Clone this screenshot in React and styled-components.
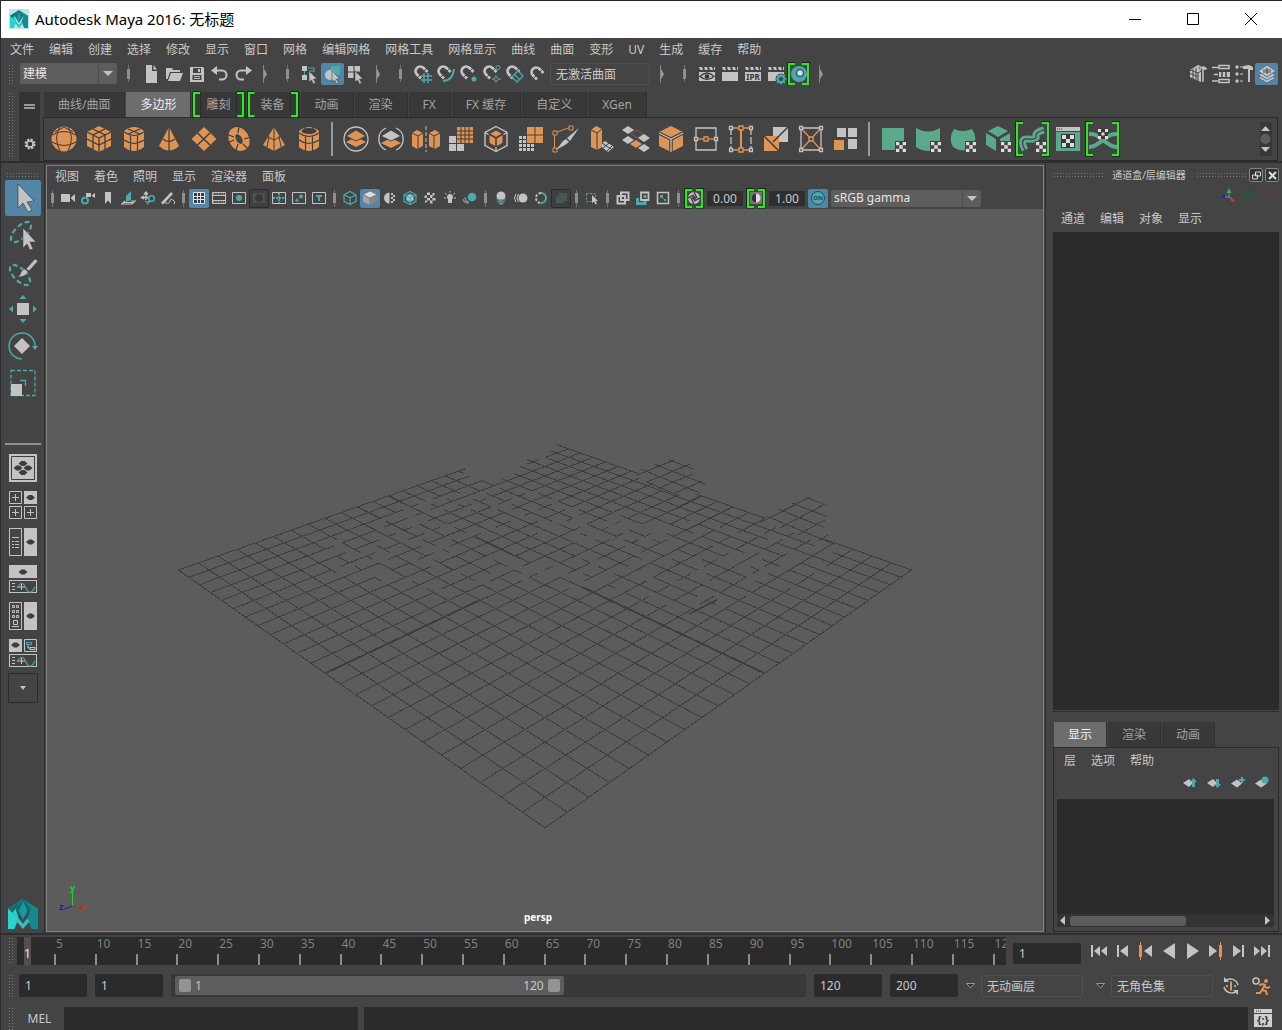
import React, { useState } from 'react';
import styled, { createGlobalStyle, css } from 'styled-components';

const GREY = '#c3c3c3';
const ORANGE = '#dd9455';
const TEAL = '#4ba9ad';
const GREEN = '#5ba88a';
const DARK = '#3d3d3d';

const MENUS = ['文件', '编辑', '创建', '选择', '修改', '显示', '窗口', '网格', '编辑网格', '网格工具', '网格显示', '曲线', '曲面', '变形', 'UV', '生成', '缓存', '帮助'];
const PANEL_MENUS = ['视图', '着色', '照明', '显示', '渲染器', '面板'];
const CHANNEL_MENUS = ['通道', '编辑', '对象', '显示'];
const LAYER_MENUS = ['层', '选项', '帮助'];

const SHELF_TABS = [
  { name: '曲线/曲面' },
  { name: '多边形' },
  { name: '雕刻', marked: true },
  { name: '装备', marked: true },
  { name: '动画' },
  { name: '渲染' },
  { name: 'FX' },
  { name: 'FX 缓存' },
  { name: '自定义' },
  { name: 'XGen' },
];

// '|' is a separator, '>' a collapse arrow, '[x]' an icon in green brackets
const FILE_ICONS = ['|', 'file', 'folder', 'save', 'undo', 'redo', '>', '|', 'selHier', 'selObj', 'selComp', '>', '|', 'snapGrid', 'snapCurve', 'snapPoint', 'snapCenter', 'snapPlane', 'magnet'];
const RENDER_ICONS = ['>', '|', 'clapEye', 'clap', 'clapIpr', 'clapGear', '[hyper]', '>'];
const PANEL_ICONS = ['|', 'camera', 'camGear', 'bookmark', 'imagePlane', 'panZoom', 'grease', '|', 'grid', 'film', 'resGate', 'gateMask', 'fieldChart', 'safeAction', 'safeTitle', '|', 'wire', 'shaded', 'defMat', 'wireShade', 'checker', 'light', 'shadow', '|', 'ao', 'blur', 'aa', 'dof', '|', 'isolate', '|', 'xray', 'xrayJoint', 'xrayComp', '|'];
const SHELF_ICONS = ['sphere', 'cube', 'cylinder', 'cone', 'plane', 'torus', 'pyramid', 'pipe', '|', 'combine', 'separate', 'mirror', 'smooth', 'boolCube', 'reduce', 'pen', 'extrude', 'bridge', 'bevel', 'collapse', 'insert', 'wedge', 'poke', 'quads', '|', 'uvPlane', 'uvCyl', 'uvSphere', 'uvAuto', '[uvCurve]', 'uvEditor', '[uvCross]'];
const TOOLS = ['arrow', 'lasso', 'brush', 'move', 'rotate', 'scale'];
const LAYOUTS = ['single', 'four', 'outliner', 'graph', 'hyperg', 'three'];
const PLAY_ICONS = ['toStart', 'backFrame', 'backKey', 'playBack', 'play', 'nextKey', 'nextFrame', 'toEnd'];
const LAYER_ICONS = ['layerUp', 'layerDown', 'layerNew', 'layerSel'];
const FRAMES = Array.from({ length: 24 }, (_, i) => (i + 1) * 5);

const magnet = (
  <g fill="none">
    <path d="M8 14.500L3.800 10.300a4.600 4.600 0 0 1 6.500-6.500L14.500 8" stroke={GREY} strokeWidth="2.800" />
    <path d="M4.500 13.500l3-3M10.500 7.500l3-3" stroke="#444" strokeWidth="1" />
  </g>
);
const clapper = (
  <g fill={GREY}>
    <path d="M2 3h3l1 3H3zM7 3h3l1 3H8zM12 3h3l1 3h-3z" />
    <path d="M2 8h16v9H2zM17 3h1v3h-1z" />
  </g>
);
const pointer = <path d="M9 7v11l2.500-2 2 4 2-1-2-4h3.500z" fill={GREY} stroke="#444" strokeWidth=".6" />;
const uvChecker = (
  <g>
    <path d="M16 16h11v11H16z" fill="#444" />
    <path d="M17 17h3.300v3.300H17zM23.700 17H27v3.300h-3.300zM20.300 20.300h3.400v3.400h-3.400zM17 23.700h3.300V27H17zM23.700 23.700H27V27h-3.300z" fill="#ddd" />
  </g>
);
const graphLine = (y) => (
  <g fill="none" strokeWidth="1">
    <rect x=".5" y={y + 0.5} width="27" height="12" stroke={GREY} />
    <path d={`M3 ${y + 3.5}h3M3 ${y + 6.5}h3M3 ${y + 9.5}h3M12.500 ${y + 4}v6M9 ${y + 7}h7`} stroke={GREY} />
    <path d={`M8 ${y + 8}q5-9 9 0t9-1`} stroke={TEAL} strokeWidth="1.200" />
  </g>
);
const diamond = (x, y) => <path d={`M${x - 4.5} ${y}l3-2.500h3l3 2.500-3 2.500h-3z`} fill={DARK} />;

// Status line, 20 x 20
const STATUS = {
  file: <path d="M5 1h6v6h5v12H5zM12.500 1L16 5.500h-3.500z" fill={GREY} />,
  folder: <path d="M2 4h6l1 2h7v2H6L3.500 15H2zM7 9h12l-3 8H4z" fill={GREY} />,
  save: <path fillRule="evenodd" d="M3 3h13l1 1v14H3zM6 4v5h8V4zM11 5h2v3h-2zM5.500 11v5h9v-5zM7 12h6v1H7zM7 14h6v1H7z" fill={GREY} />,
  undo: (
    <g>
      <path d="M5 6.500h7a4 4 0 0 1 0 9H9" fill="none" stroke={GREY} strokeWidth="2" />
      <path d="M1 6.500L7 2v9z" fill={GREY} />
    </g>
  ),
  redo: (
    <g>
      <path d="M15 6.500H8a4 4 0 0 0 0 9h3" fill="none" stroke={GREY} strokeWidth="2" />
      <path d="M19 6.500L13 2v9z" fill={GREY} />
    </g>
  ),
  selHier: (
    <g>
      <path d="M2 2h5v5H2zM2 11h5v5H2z" fill={GREY} />
      <path d="M4.500 7v4M8 4h6v4M9 7h5" fill="none" stroke={TEAL} />
      {pointer}
    </g>
  ),
  selObj: (
    <g>
      <path d="M8 2h9v9H8z" fill={TEAL} />
      <circle cx="7" cy="11" r="5" fill={GREY} />
      {pointer}
    </g>
  ),
  selComp: (
    <g>
      <path d="M2 2h5.500v5.500H2zM8.500 2H14v5.500H8.500zM2 8.500h5.500V14H2z" fill={GREY} />
      {pointer}
    </g>
  ),
  magnet: <g transform="translate(1 1)">{magnet}</g>,
  snapGrid: <g>{magnet}<path d="M11 9v10M15 9v10M8 12h11M8 16h11" stroke={TEAL} strokeWidth="1.500" /></g>,
  snapCurve: <g>{magnet}<path d="M7 17c7 0 10-4 11-12" fill="none" stroke={TEAL} strokeWidth="2" /></g>,
  snapPoint: <g>{magnet}<circle cx="15" cy="15" r="2.500" fill={TEAL} /></g>,
  snapCenter: (
    <g>
      {magnet}
      <circle cx="16" cy="3.500" r="2" fill="none" stroke={TEAL} />
      <circle cx="14" cy="15" r="2" fill="none" stroke={TEAL} />
      <path d="M14 11v2M14 17v2M10 15h2M16 15h3" stroke={TEAL} />
    </g>
  ),
  snapPlane: <g>{magnet}<path d="M7 13l6-6 5 5-6 6zM10 11l4 4" fill="#444" stroke={TEAL} strokeWidth="1.300" /></g>,
  clap: clapper,
  clapEye: (
    <g>
      {clapper}
      <path d="M3 12.500q7-7 14 0q-7 6-14 0z" fill={GREY} stroke="#333" strokeWidth="1.200" />
      <circle cx="10" cy="12.500" r="2.300" fill="#333" />
    </g>
  ),
  clapIpr: (
    <g>
      {clapper}
      <text x="10" y="16" fontSize="8" fontWeight="700" textAnchor="middle" fill="#333">IPR</text>
    </g>
  ),
  clapGear: (
    <g>
      {clapper}
      <circle cx="15" cy="15" r="5.500" fill="#444" />
      <circle cx="15" cy="15" r="3.500" fill="none" stroke={TEAL} strokeWidth="2" />
      <path d="M15 9.500v11M9.500 15h11M11 11l8 8M19 11l-8 8" stroke={TEAL} strokeWidth="1.200" />
      <circle cx="15" cy="15" r="2" fill="#444" />
    </g>
  ),
  hyper: (
    <g>
      <circle cx="10" cy="10" r="8" fill={TEAL} />
      <circle cx="11" cy="9" r="3.500" fill="#ddd" stroke="#2c5f78" strokeWidth="1.500" />
    </g>
  ),
  modeling: (
    <g>
      <path d="M2 6l8-5 3 1v16l-5-2-6-3z" fill={GREY} />
      <path d="M5 5v10M8 4v13M2 9.500l8 3M2 6l8 3v9M10 9l3-2" stroke="#444" fill="none" />
      <path d="M11 3l5-1 3 2v2h-3v12h-2V5h-3z" fill={GREY} stroke="#444" strokeWidth=".5" />
    </g>
  ),
  attr: (
    <g fill="none" stroke={GREY} strokeWidth="1.500">
      <path d="M1 3.500h6M3 10.500h4M1 17h6" />
      <path d="M8 1.500h10v3H8zM8 15.500h10v3H8z" />
      <path d="M8 8h11v5H8z" fill={GREY} stroke="none" />
      <path d="M11 8v5M15 8v5" stroke="#444" />
    </g>
  ),
  toolSet: (
    <g fill={GREY}>
      <circle cx="3" cy="3" r="1.700" />
      <circle cx="3" cy="10" r="1.700" />
      <circle cx="3" cy="17" r="1.700" />
      <path d="M6 2.500h3v1H6zM6 9.500h3v1H6zM6 16.500h3v1H6zM9 2l6-1 4 2v3h-3v12h-2V5H9z" />
    </g>
  ),
  layers: (
    <g fill={GREY} stroke="#46698a" strokeWidth=".9">
      <path d="M1 14l9-5 9 5-9 5z" />
      <path d="M1 11l9-5 9 5-9 5z" />
      <path d="M1 7l9-6 9 6-9 6z" />
      <path d="M6 6h8M6 8h8M10 4v6" stroke="#444" />
    </g>
  ),
  loop: (
    <g fill="none" stroke={GREY} strokeWidth="1.500">
      <path d="M4 5a8 8 0 0 1 13 4M16 15A8 8 0 0 1 3 11" />
      <path d="M3 1v5h5zM17 19v-5h-5z" fill={GREY} stroke="none" />
      <path d="M10 5.500v9" stroke={ORANGE} strokeWidth="2" />
      <path d="M5 10h2M13 10h2" />
    </g>
  ),
  runner: (
    <g fill="none" stroke={ORANGE} strokeWidth="2">
      <circle cx="5" cy="5" r="3" stroke={GREY} strokeWidth="1.500" />
      <circle cx="15" cy="5" r="2" fill={ORANGE} stroke="none" />
      <path d="M8 9l4-1 2 1-3 5 4 1 1 4M11 14l-2 3H5M13 10l3 2 3-1" />
    </g>
  ),
  script: (
    <g>
      <path d="M1 1h18v4H1zM1 6h18v13H1z" fill="#d0d0d0" />
      <path d="M3 3h1M5 3h1M7 3h1" stroke="#333" />
      <text x="10" y="16" fontSize="11" fontWeight="700" textAnchor="middle" fill="#333">{'{;}'}</text>
    </g>
  ),
};

// Panel toolbar, 16 x 16
const PANEL = {
  camera: <path d="M1 4h9v8H1zM11 7.500L15 4v8l-4-3.500z" fill={GREY} />,
  camGear: (
    <g>
      <path d="M6 3h5v4H6zM12 5l3-2v5l-3-2z" fill={GREY} />
      <circle cx="5" cy="10.500" r="3" fill="none" stroke={TEAL} strokeWidth="2" />
    </g>
  ),
  bookmark: <path d="M5 2h6v12l-3-3.500L5 14z" fill={GREY} />,
  imagePlane: (
    <g>
      <path d="M6 6l5-5v9l-5 2z" fill={TEAL} />
      <path d="M5 11L2 14h10l3-3h-4M4 12.500h9" fill="none" stroke={GREY} strokeWidth="1.200" />
    </g>
  ),
  panZoom: (
    <g fill="none">
      <path d="M6 3v7M2 7.500h8M4 4.500L6 2l2 2.500M4 6L1.500 7.500 4 9M6 11v1" stroke={GREY} strokeWidth="1.400" />
      <circle cx="11.500" cy="8.500" r="2.800" stroke={TEAL} strokeWidth="1.600" />
      <path d="M9.500 11L7 14" stroke={TEAL} strokeWidth="2" />
    </g>
  ),
  grease: (
    <g fill="none">
      <path d="M12 3L5 10.500l-3 3" stroke={GREY} strokeWidth="2.600" />
      <path d="M5 13q5 1 5-2t3-1 1 4" stroke={GREY} />
    </g>
  ),
  grid: <path d="M2.500 2.500h11v11h-11zM2.500 6.500h11M2.500 9.500h11M6.500 2.500v11M9.500 2.500v11" fill="#2d3b47" stroke="#e3e3e3" />,
  film: (
    <g fill="none" stroke={GREY}>
      <path d="M1.500 2.500h13v11h-13zM1.500 5.500h13M1.500 10.500h13" />
      <path d="M2 4h12M2 12h12" strokeDasharray="1 1.500" />
    </g>
  ),
  resGate: (
    <g>
      <path d="M1.500 2.500h13v11h-13z" fill="none" stroke={GREY} />
      <circle cx="8" cy="8" r="3" fill={TEAL} />
    </g>
  ),
  gateMask: (
    <g>
      <rect x="2" y="3" width="12" height="10" fill="#505050" />
      <circle cx="8" cy="8" r="4" fill="#3a3a3a" />
    </g>
  ),
  fieldChart: (
    <g fill="none">
      <path d="M1.500 2.500h13v11h-13z" stroke={GREY} />
      <path d="M8 3v10M2 8h12" stroke={TEAL} strokeWidth="2" strokeDasharray="2 1" />
    </g>
  ),
  safeAction: (
    <g>
      <path d="M1.500 2.500h13v11h-13z" fill="none" stroke={GREY} />
      <circle cx="10" cy="6.500" r="2" fill={TEAL} />
      <path d="M4 11.500L6 8l2 3.500z" fill={TEAL} />
    </g>
  ),
  safeTitle: (
    <g>
      <path d="M1.500 2.500h13v11h-13z" fill="none" stroke={GREY} />
      <path d="M5 5h6v2H9v4H7V7H5z" fill={TEAL} />
    </g>
  ),
  wire: <path d="M8 1.500l6 3.300v6.600L8 14.500l-6-3.100V4.800zM2 4.800l6 3 6-3M8 7.800v6.700" fill="none" stroke={TEAL} strokeWidth="1.200" />,
  shaded: (
    <g>
      <path d="M8 1l7 3.500L8 8 1 4.500z" fill="#ddd" stroke="#555" strokeWidth=".5" />
      <path d="M1 5l6.500 3.500V15L1 11.500z" fill="#a9a39c" />
      <path d="M15 5L8.500 8.500V15l6.500-3.500z" fill="#8c857e" />
    </g>
  ),
  defMat: (
    <g>
      <path d="M7.500 2.500a5.500 5.500 0 0 0 0 11z" fill={GREY} />
      <path d="M9 3h2v2H9zM11 5h2v2h-2zM9 7h2v2H9zM11 9h2v2h-2zM9 11h2v2H9z" fill={GREY} />
    </g>
  ),
  wireShade: (
    <g fill="none" stroke={TEAL} strokeWidth="1.200">
      <path d="M8 1.500l6 3.300v6.600L8 14.500l-6-3.100V4.800z" />
      <path d="M8 4l3.500 2v4L8 12l-3.500-2V6z" fill="#b9c9ca" />
      <path d="M2 4.800l6 3 6-3M8 7.800v6.700" />
    </g>
  ),
  checker: (
    <g fill={GREY}>
      <path d="M5 2.500h3V5H5zM10.500 3h2v2.500h-2zM8 5h2.500v3H8zM2.500 5.500H5V8H2.500zM5 8h3v2.500H5zM10.500 8h3v2.500h-3zM3 10.500h2v2H3zM8 10.500h2.500v3H8z" />
    </g>
  ),
  light: (
    <g>
      <path d="M8 4a3 3 0 0 1 2 5.300V13H6V9.300A3 3 0 0 1 8 4z" fill={GREY} />
      <path d="M8 1v1.500M2 8h2M12 8h2M3 3l1.500 1.500M13 3l-1.500 1.500" stroke={GREY} />
    </g>
  ),
  shadow: (
    <g>
      <circle cx="10" cy="7" r="4.300" fill={TEAL} />
      <path d="M1 9q1 4 6 4M3 7q0 4 4 5" fill="none" stroke="#6f8f90" strokeWidth="1.500" />
    </g>
  ),
  ao: (
    <g>
      <circle cx="8" cy="6" r="4.500" fill={GREY} />
      <path d="M3.500 8.500q4.500 3 9 0M4 11q4 2.500 8 0M5.500 13.500q2.500 1 5 0" fill="none" stroke="#5f9a9c" strokeWidth="1.300" />
    </g>
  ),
  blur: (
    <g>
      <circle cx="10" cy="8" r="4.500" fill={GREY} />
      <path d="M5.500 4q-3 4 0 8M3 4q-3 4 0 8" fill="none" stroke={GREY} />
    </g>
  ),
  aa: (
    <g fill="none" strokeWidth="2">
      <path d="M8 3a5 5 0 0 1 0 10" stroke={TEAL} />
      <path d="M8 3a5 5 0 0 0 0 10" stroke={GREY} strokeDasharray="2.500 1.500" />
    </g>
  ),
  dof: <path d="M6 3h8v8h-3v2H3V6h3z" fill="#46585a" />,
  isolate: (
    <g>
      <path d="M2.500 3.500h9v8h-9z" fill="none" stroke={TEAL} strokeDasharray="2 1.500" />
      <path d="M8 5v8l2-1.500 1.500 3 1.500-1-1.500-2.500H14z" fill={GREY} />
    </g>
  ),
  xray: <path d="M6 2.500h7.500V10H6zM2.500 6H10v7.500H2.500z" fill="none" stroke={GREY} strokeWidth="2" />,
  xrayJoint: (
    <g fill="none" strokeWidth="1.800">
      <path d="M2.500 8v5.500H10V11" stroke={TEAL} strokeWidth="3" />
      <path d="M6 2.500h7.500V10H6z" stroke={GREY} />
      <path d="M8.500 5h3v3h-3z" fill={TEAL} />
    </g>
  ),
  xrayComp: (
    <g>
      <path d="M2.500 2.500h11v11h-11z" fill="none" stroke={GREY} strokeWidth="1.500" />
      <path d="M5 5h3v3H5zM9 9h2v2H9zM8 8h1v1H8z" fill={TEAL} />
    </g>
  ),
  aperture: (
    <g>
      <circle cx="8" cy="8" r="6" fill={GREY} />
      <path d="M8 2l3 6M14 8l-6 3M8 14L5 8M2 8l6-3" stroke="#444" strokeWidth="1.500" />
      <circle cx="8" cy="8" r="2" fill="#444" />
    </g>
  ),
  contrast: (
    <g>
      <path d="M2 2h12v12H2z" fill="#777" />
      <circle cx="8" cy="8" r="4.500" fill="#ddd" />
      <path d="M8 3.500a4.500 4.500 0 0 0 0 9z" fill="#333" />
    </g>
  ),
  on: (
    <g>
      <circle cx="8" cy="8" r="6.500" fill={TEAL} stroke="#254d63" />
      <text x="8" y="10" fontSize="6" fontWeight="700" textAnchor="middle" fill="#1f4458">ON</text>
    </g>
  ),
  layerUp: (
    <g>
      <path d="M1 8l6-4 4 4-4 4z" fill={GREY} />
      <path d="M10 12V7H8l3.500-4L15 7h-2v5z" fill={TEAL} />
    </g>
  ),
  layerDown: (
    <g>
      <path d="M1 8l6-4 4 4-4 4z" fill={GREY} />
      <path d="M10 4v5H8l3.500 4L15 9h-2V4z" fill={TEAL} />
    </g>
  ),
  layerNew: (
    <g>
      <path d="M1 8.500l6-4 5 4-5 4z" fill={GREY} />
      <path d="M9 4h2V2h2v2h2v2h-2v2h-2V6H9z" fill={TEAL} />
    </g>
  ),
  layerSel: (
    <g>
      <path d="M1 8.500l6-4 6 4-6 4z" fill={GREY} />
      <circle cx="11" cy="5" r="3.500" fill={TEAL} />
    </g>
  ),
};

// Shelf, 28 x 28
const SHELF = {
  sphere: (
    <g>
      <circle cx="14" cy="14" r="12.500" fill={ORANGE} />
      <path d="M2 10q12-7 24 0M2 17q12 7 24 0M10 2q-7 10 0 24M18 2q7 10 0 24M14 2L5 7M14 2l9 5" fill="none" stroke={DARK} />
    </g>
  ),
  cube: (
    <g>
      <path d="M14 1l12 6v14l-12 6-12-6V7z" fill={ORANGE} />
      <path d="M2 7l12 6 12-6M14 13v14M8 4l12 6v14M20 4L8 10v14M2 14l12 6 12-6" fill="none" stroke={DARK} strokeWidth="1.300" />
    </g>
  ),
  cylinder: (
    <g>
      <path d="M4 6q10-8 20 0v16q-10 8-20 0z" fill={ORANGE} />
      <path d="M4 7q10 7 20 0M4 15q10 7 20 0M10.500 10v16M17.500 10v16M8 4l12 5M20 4L8 9" fill="none" stroke={DARK} strokeWidth="1.200" />
    </g>
  ),
  cone: (
    <g>
      <path d="M14 2l10 19q-10 9-20 0z" fill={ORANGE} />
      <path d="M14 2v24M8 14q6 5 12 0" fill="none" stroke={DARK} strokeWidth="1.200" />
    </g>
  ),
  plane: (
    <g>
      <path d="M14 2l12.500 12L14 26 1.500 14z" fill={ORANGE} />
      <path d="M7.500 8L20 20M20 8L7.500 20" stroke={DARK} strokeWidth="1.500" />
    </g>
  ),
  torus: (
    <g fill="none">
      <ellipse cx="14" cy="14" rx="6.500" ry="9" stroke={ORANGE} strokeWidth="7" transform="rotate(-30 14 14)" />
      <path d="M1 9l8 3M14 1l-1 7M26 12l-7 2M23 24l-5-5M11 25l2-6M2 18l7-3" stroke={DARK} strokeWidth="1.200" />
    </g>
  ),
  pyramid: (
    <g>
      <path d="M14 2l11 18-11 6-11-6z" fill={ORANGE} />
      <path d="M14 2v24M8 12l6 3 6-3M9 11L7 22M19 11l2 11" fill="none" stroke={DARK} />
    </g>
  ),
  pipe: (
    <g>
      <path d="M4 6q10-8 20 0v16q-10 8-20 0z" fill={ORANGE} />
      <ellipse cx="14" cy="6" rx="7.500" ry="3" fill={DARK} />
      <path d="M4 8q10 7 20 0M4 15q10 7 20 0M10.500 11v15M17.500 11v15M10 1v3M18 1v3" fill="none" stroke={DARK} strokeWidth="1.200" />
    </g>
  ),
  combine: (
    <g>
      <circle cx="14" cy="14" r="12" fill="none" stroke={GREY} strokeWidth="1.300" />
      <path d="M4 17l10-5 10 5-10 5z" fill={ORANGE} />
      <path d="M4 11l10-6 10 6-10 5z" fill={ORANGE} stroke="#444" />
    </g>
  ),
  separate: (
    <g>
      <path d="M9 3a12 12 0 0 0 0 22M19 3a12 12 0 0 1 0 22" fill="none" stroke={GREY} strokeWidth="1.300" />
      <path d="M4 18l10-5 10 5-10 5z" fill={ORANGE} />
      <path d="M4 11l10-6 10 6-10 5z" fill={GREY} stroke="#444" />
    </g>
  ),
  mirror: (
    <g>
      <path d="M0 8l5-3 6 3v13l-6 3-5-3zM17 8l6-3 5 3v13l-5 3-6-3z" fill={ORANGE} />
      <path d="M0 8l6 3 5-3M6 11v13M17 8l5 3 6-3M22 11v13" fill="none" stroke={DARK} />
      <path d="M14 1v26" stroke={GREY} strokeDasharray="4 2" />
    </g>
  ),
  smooth: (
    <g>
      <path d="M10 2h16v16H10z" fill={ORANGE} />
      <path d="M14 2v16M18 2v16M22 2v16M10 6h16M10 10h16M10 14h16" stroke={DARK} />
      <path d="M2 10h8v9H2z" fill="#444" />
      <path d="M2 11h7v7H2zM2 19h7v7H2zM10 19h7v7h-7z" fill={GREY} />
    </g>
  ),
  boolCube: (
    <g>
      <path d="M14 1.500l11 6v13l-11 6-11-6v-13zM3 7.500l11 6 11-6M14 13.500v13" fill="none" stroke={GREY} strokeWidth="1.400" />
      <path d="M14 5l7 4v9l-7 4-7-4V9z" fill={ORANGE} stroke="#444" />
      <path d="M7 9l7 4 7-4M14 13v9" fill="none" stroke={DARK} strokeWidth="1.500" />
    </g>
  ),
  reduce: (
    <g>
      <path d="M2 11h15v15H2z" fill={GREY} />
      <path d="M5.500 11v15M9.500 11v15M13.500 11v15M2 14.500h15M2 18.500h15M2 22.500h15" stroke={DARK} />
      <path d="M9 1h18v18H9z" fill="#444" />
      <path d="M10 2h7.500v7.500H10zM18.500 2H26v7.500h-7.500zM18.500 10.500H26V18h-7.500zM10 10.500h7.500V18H10z" fill={ORANGE} />
    </g>
  ),
  pen: (
    <g>
      <path d="M2.500 9v16M2.500 8L19 2" fill="none" stroke={ORANGE} />
      <path d="M1 6h4v4H1zM17 1h4v4h-4zM1 23h4v4H1z" fill="#444" stroke={ORANGE} />
      <path d="M27 3l-9 13-3-3zM14 14l3 3-4 3L4 25l7-9z" fill={GREY} />
    </g>
  ),
  extrude: (
    <g>
      <path d="M12 20l6-4 9 6-6 5z" fill={GREY} />
      <path d="M16 23l6-5M20 26l5-5M15 18l9 6" stroke={DARK} />
      <path d="M4 5l5-4 6 3v18l-5 3-6-3z" fill={ORANGE} />
      <path d="M4 5l6 3 5-4M10 8v17" fill="none" stroke={DARK} />
    </g>
  ),
  bridge: (
    <g fill={GREY}>
      <path d="M0 5l6-4 6 4-6 4zM16 13l6-4 6 4-6 4zM0 15l6-4 6 4-6 4zM16 23l6-4 6 4-6 4z" />
      <path d="M9 9l6-4 6 4-6 4z" fill="none" stroke="#7d5f4d" />
      <path d="M8 19l6-4 6 4-6 4z" fill={ORANGE} />
    </g>
  ),
  bevel: (
    <g>
      <path d="M14 1l12 6v14l-12 6-12-6V7z" fill={ORANGE} />
      <path d="M2 8l12 6 12-6M14 14v13" fill="none" stroke={DARK} strokeWidth="3.500" />
      <path d="M2 8l12 6 12-6M14 14v13" fill="none" stroke={GREY} strokeWidth="1.300" />
    </g>
  ),
  collapse: (
    <g fill="#444" stroke={GREY} strokeWidth="1.300">
      <path d="M4 3h20v22H4z" />
      <path d="M3 14h22" stroke={ORANGE} />
      <path d="M2.500 12.500h3v3h-3zM22.500 12.500h3v3h-3z" />
      <path d="M12 12h4v4h-4z" stroke={ORANGE} />
    </g>
  ),
  insert: (
    <g fill="#444" stroke={GREY} strokeWidth="1.300">
      <path d="M4 3h20M4 25h20" stroke={ORANGE} />
      <path d="M4 3v22M24 3v22" strokeDasharray="7 2" />
      <path d="M14 3v22" stroke={ORANGE} strokeWidth="2" />
      <path d="M2.500 1.500h3v3h-3zM22.500 1.500h3v3h-3zM2.500 23.500h3v3h-3zM22.500 23.500h3v3h-3z" />
      <path d="M12 1h4v4h-4zM12 23h4v4h-4z" stroke={ORANGE} />
    </g>
  ),
  wedge: (
    <g>
      <path d="M11 2h15v15H11z" fill={GREY} />
      <path d="M2 11h15v15H2z" fill={ORANGE} />
      <path d="M2 11l15 15M26 2L11 17" stroke={DARK} strokeWidth="1.500" />
    </g>
  ),
  poke: (
    <g fill="#444" stroke={GREY} strokeWidth="1.300">
      <path d="M4 3h20v22H4z" />
      <path d="M4 3l20 22M24 3L4 25" stroke={ORANGE} />
      <path d="M2.500 1.500h3v3h-3zM22.500 1.500h3v3h-3zM2.500 23.500h3v3h-3zM22.500 23.500h3v3h-3z" />
      <path d="M12 12h4v4h-4z" stroke={ORANGE} />
    </g>
  ),
  quads: (
    <g>
      <path d="M5 3h9v9H5zM16 3h9v9h-9zM16 14h9v10h-9z" fill={GREY} />
      <path d="M2 15h10v10H2z" fill={ORANGE} />
    </g>
  ),
  uvPlane: <g><path d="M3 3h22v22H3z" fill={GREEN} />{uvChecker}</g>,
  uvCyl: <g><path d="M2 3q12 7 24 0v19q-12 8-24 0z" fill={GREEN} />{uvChecker}</g>,
  uvSphere: <g><path d="M5 4q9 4 18 0 6 8 1 18-10 7-20 0-5-9 1-18z" fill={GREEN} />{uvChecker}</g>,
  uvAuto: <g><path d="M14 1l10 5-10 6L4 6zM2 8l10 6v12L2 20zM26 8l-10 6v12l10-6z" fill={GREEN} />{uvChecker}</g>,
  uvCurve: (
    <g fill="none">
      <path d="M6 25Q0 13 9 14t8-3T25 5" stroke={GREEN} strokeWidth="7" />
      <path d="M6 25Q0 13 9 14t8-3T25 5" stroke={DARK} strokeWidth="1.200" />
      {uvChecker}
    </g>
  ),
  uvEditor: (
    <g>
      <path d="M2 2h24v4H2z" fill={GREY} />
      <path d="M3 4h1M5 4h1M7 4h1" stroke="#333" />
      <path d="M2 7h24v19H2z" fill={GREEN} />
      <path d="M7 9h14v14H7z" fill="#383838" />
      <path d="M8 10h4v4H8zM16 10h4v4h-4zM12 14h4v4h-4zM8 18h4v4H8zM16 18h4v4h-4z" fill="#ddd" />
    </g>
  ),
  uvCross: (
    <g>
      <path d="M0 9c8 0 8 2 14 6s8 7 14 7M28 9c-8 0-8 2-14 6S6 22 0 22" fill="none" stroke={GREEN} strokeWidth="4" />
      <path d="M9 4h10v10H9z" fill="#383838" />
      <path d="M9 4h3v3H9zM16 4h3v3h-3zM12.500 7.500h3v3h-3zM9 11h3v3H9zM16 11h3v3h-3z" fill="#ddd" />
    </g>
  ),
};

// Tool box and layouts, 28 x 28
const TOOLBOX = {
  arrow: <path d="M9 0v24l5-5 5 9 4-2-5-8 7-1z" fill={GREY} stroke="#333" strokeWidth=".6" />,
  lasso: (
    <g>
      <ellipse cx="12" cy="11" rx="6" ry="13" fill="none" stroke={TEAL} strokeWidth="2.200" strokeDasharray="5 3" transform="rotate(45 12 11)" />
      <path d="M14 7v20l4-4 3 6 3-1-3-7h6z" fill={GREY} stroke="#444" strokeWidth=".6" />
    </g>
  ),
  brush: (
    <g>
      <ellipse cx="11" cy="17" rx="6" ry="13" fill="none" stroke={TEAL} strokeWidth="2.200" strokeDasharray="5 3" transform="rotate(-45 11 17)" />
      <path d="M26 1l3 2-9 10-3-2zM16 11l3 3q-2 5-11 5 4-2 4-5 2-3 4-3z" fill={GREY} stroke="#444" strokeWidth=".6" />
    </g>
  ),
  move: (
    <g>
      <path d="M8 8h12v12H8z" fill={GREY} />
      <path d="M10.500 4L14 0l3.500 4zM10.500 24l3.500 4 3.500-4zM4 10.500L0 14l4 3.500zM24 10.500l4 3.500-4 3.500z" fill={TEAL} />
    </g>
  ),
  rotate: (
    <g>
      <path d="M13 6l8 8-8 8-8-8z" fill={GREY} />
      <path d="M13 27A13 13 0 1 1 26 15" fill="none" stroke={TEAL} strokeWidth="1.500" />
      <path d="M23 14h6l-3 4z" fill={TEAL} />
    </g>
  ),
  scale: (
    <g>
      <path d="M2 1.500h24v25H2z" fill="none" stroke={TEAL} strokeWidth="1.300" strokeDasharray="4 2" />
      <path d="M2 15h11v12H2z" fill={GREY} />
      <path d="M11 11.500h5.500V17" fill="none" stroke={TEAL} strokeWidth="1.300" />
    </g>
  ),
  single: (
    <g>
      <path d="M0 0h28v28H0z" fill={GREY} />
      <path d="M2.500 2.500h23v23h-23z" fill="none" stroke={DARK} />
      {diamond(14, 9.5)}
      {diamond(9, 14)}
      {diamond(19, 14)}
      {diamond(14, 18.5)}
    </g>
  ),
  four: (
    <g fill="none" stroke={GREY}>
      <path d="M.5.500h12v12H.500zM.500 15.500h12v12H.500zM15.500 15.500h12v12h-12zM6.500 3v7M3 6.500h7M6.500 18v7M3 21.500h7M21.500 18v7M18 21.500h7" />
      <path d="M15 0h13v13H15z" fill={GREY} stroke="none" />
      <g stroke="none">{diamond(21.5, 6.5)}</g>
    </g>
  ),
  outliner: (
    <g>
      <path d="M.5.500h12v27H.500zM3 9.500h7M3 13.500h2M6 13.500h4M3 16.500h2M6 16.500h4M3 19.500h2M6 19.500h4" fill="none" stroke={GREY} />
      <path d="M15 0h13v28H15z" fill={GREY} />
      {diamond(21.5, 14)}
    </g>
  ),
  graph: (
    <g>
      <path d="M0 0h28v13H0z" fill={GREY} />
      {diamond(14, 7)}
      {graphLine(15)}
    </g>
  ),
  hyperg: (
    <g>
      <path d="M.5.500h12v27H.500zM3.500 3.500h2v2h-2zM7.500 3.500h2v2h-2zM3.500 8.500h2v2h-2zM7.500 8.500h2v2h-2zM3.500 13.500h2v2h-2zM7.500 13.500h2v2h-2zM4.500 18.500h4v4h-4zM3 24.500h7" fill="none" stroke={GREY} />
      <path d="M15 0h13v28H15z" fill={GREY} />
      {diamond(21.5, 14)}
    </g>
  ),
  three: (
    <g>
      <path d="M0 0h13v13H0z" fill={GREY} />
      {diamond(6.5, 6)}
      <path d="M15.500.500h12v12h-12zM21 8.500h5v2h-5zM19 5v4h2" fill="none" stroke={GREY} />
      <path d="M17.500 3.500h5v2h-5z" fill="none" stroke={TEAL} />
      {graphLine(15)}
    </g>
  ),
  logo: (
    <g>
      <path d="M0 9L14 0l-7 9 3 9-4 10H0z" fill="#27d3cf" />
      <path d="M28 9L14 0l7 9-3 9 4 10h6z" fill="#138a92" />
      <path d="M14 0L7 9l7 11 7-11z" fill="#0d6f75" />
      <path d="M14 2l-4 9 4 8 4-8z" fill="#1b9a9b" />
      <path d="M0 9L14 0 4 13l6 5z" fill="#15706f" />
      <path d="M10 18l4 5 4-5 2 3-6 7-6-7z" fill="#35bfc0" />
    </g>
  ),
};

const PLAY = {
  toStart: <path d="M1 4h2v12H1zM10 5v10l-6-5zM17 5v10l-6-5z" fill={GREY} />,
  backFrame: <path d="M4 4h2v12H4zM15 4v12l-8-6z" fill={GREY} />,
  backKey: <g><path d="M3 4h3v12H3zM4 1h1v18H4z" fill={ORANGE} /><path d="M16 4v12l-8-6z" fill={GREY} /></g>,
  playBack: <path d="M16 2v16L4 10z" fill={GREY} />,
  play: <path d="M5 2v16l12-8z" fill={GREY} />,
  nextKey: <g><path d="M14 4h3v12h-3zM15 1h1v18h-1z" fill={ORANGE} /><path d="M4 4v12l8-6z" fill={GREY} /></g>,
  nextFrame: <path d="M14 4h2v12h-2zM5 4v12l8-6z" fill={GREY} />,
  toEnd: <path d="M17 4h2v12h-2zM3 5v10l6-5zM10 5v10l6-5z" fill={GREY} />,
};

const Icon = ({ set, name, size, box }) => (
  <Svg width={size} height={size} viewBox={`0 0 ${box || size} ${box || size}`} aria-hidden="true">
    {set[name]}
  </Svg>
);

const IconStrip = ({ items, set, size, cell, height, sep, active = [], pressed = [] }) =>
  items.map((item, i) => {
    if (item === '|') return <Separator key={i} $w={sep} $plain={set === SHELF} />;
    if (item === '>') return <Collapse key={i} $w={sep} />;
    const marked = item[0] === '[';
    const name = marked ? item.slice(1, -1) : item;
    return (
      <IconButton
        key={i}
        type="button"
        aria-label={name}
        $w={cell}
        $h={height}
        $active={active.includes(name)}
        $pressed={pressed.includes(name)}
        $marked={marked}
      >
        <Icon set={set} name={name} size={size} />
      </IconButton>
    );
  });

const MenuList = ({ items }) => items.map((m) => <MenuItem key={m} type="button">{m}</MenuItem>);

const HollowArrow = () => (
  <Svg width="9" height="6"><path d="M.5.500h8l-4 4.500z" fill="#333" stroke="#999" /></Svg>
);

// Ground grid, 24 x 24 cells seen from the persp camera
const project = (a, b) => {
  const s = (a + b) / 24;
  const w = 1 - 0.3316 * s;
  return [545 + ((a - b) * 15.27) / w, (570 - 16.6 * s) / w];
};

const inside = ([x, y], poly) => {
  let hit = false;
  for (let i = 0, j = poly.length - 1; i < poly.length; j = i++) {
    const [xi, yi] = poly[i];
    const [xj, yj] = poly[j];
    if (yi > y !== yj > y && x < ((xj - xi) * (y - yi)) / (yj - yi) + xi) hit = !hit;
  }
  return hit;
};

const HOLES = [
  [[465, 430], [465, 476], [478, 482], [492, 480], [512, 473], [526, 464], [530, 457], [543, 459], [556, 447], [556, 430]],
  [[633, 465], [636, 475], [648, 482], [676, 496], [699, 493], [706, 480], [690, 460]],
  [[760, 510], [762, 519], [775, 524], [823, 546], [824, 530]],
];
const WORN = [[315, 548], [390, 515], [430, 490], [540, 485], [620, 515], [720, 525], [800, 530], [840, 550], [810, 590], [740, 600], [700, 615], [640, 590], [545, 600], [480, 598], [400, 585], [340, 582]];
const PATCHES = [
  { id: 'patch-a', clip: [[643, 468], [672, 459], [698, 466], [690, 472], [706, 484], [698, 494], [676, 496], [648, 483], [634, 474]], from: [-6, -8], to: [672, 461] },
  { id: 'patch-b', clip: [[757, 522], [788, 504], [808, 497], [828, 506], [824, 529], [835, 545], [800, 536], [775, 526]], from: [3, -8], to: [808, 498] },
];

const seg = (p, q) => `M${p[0].toFixed(1)} ${p[1].toFixed(1)}L${q[0].toFixed(1)} ${q[1].toFixed(1)}`;

const buildGrid = (worn) => {
  const parts = [];
  for (let i = -12; i <= 12; i++) {
    for (let j = -12; j < 12; j += 0.5) {
      [[project(i, j), project(i, j + 0.5)], [project(j, i), project(j + 0.5, i)]].forEach(([p, q], k) => {
        const mid = [(p[0] + q[0]) / 2, (p[1] + q[1]) / 2];
        if (worn) {
          if (HOLES.some((h) => inside(mid, h))) return;
          const noise = Math.abs(Math.sin(i * 12.9898 + j * 78.233 + k * 37.719) * 43758.5453) % 1;
          if (inside(mid, WORN) && noise < 0.22) return;
        }
        parts.push(seg(p, q));
      });
    }
  }
  return parts.join('');
};

const WORN_GRID = buildGrid(true);
const FULL_GRID = buildGrid(false);

const GroundGrid = () => (
  <Scene viewBox="47 209 996 722" preserveAspectRatio="xMidYMid meet" aria-hidden="true">
    <g fill="none" stroke="#3e3e3e" shapeRendering="crispEdges">
      <path d={WORN_GRID} />
      {PATCHES.map(({ id, clip, from, to }) => {
        const [x, y] = project(from[0], from[1]);
        return (
          <g key={id}>
            <clipPath id={id}>
              <polygon points={clip.map((p) => p.join(',')).join(' ')} />
            </clipPath>
            <g clipPath={`url(#${id})`}>
              <path d={FULL_GRID} transform={`translate(${to[0] - x} ${to[1] - y})`} />
            </g>
          </g>
        );
      })}
      <path d="M326 673L480 600M582 587L764 673M476 537L513 555M389 496L403 503M689 614L717 600M677 508L701 496" strokeWidth="2" />
    </g>
  </Scene>
);

const App = () => {
  const [shelf, setShelf] = useState('多边形');
  const [tool, setTool] = useState('arrow');

  return (
    <Window>
      <GlobalStyle />
      <TitleBar>
        <AppIcon><Icon set={TOOLBOX} name="logo" size={18} box={28} /></AppIcon>
        <Title>Autodesk Maya 2016: 无标题</Title>
        <WindowButton type="button" aria-label="minimize"><Svg width="12" height="12"><path d="M0 6.500h12" stroke="#000" /></Svg></WindowButton>
        <WindowButton type="button" aria-label="maximize"><Svg width="12" height="12"><path d="M.5.500h11v11H.500z" fill="none" stroke="#000" /></Svg></WindowButton>
        <WindowButton type="button" aria-label="close"><Svg width="12" height="12"><path d="M0 0l12 12M12 0L0 12" stroke="#000" /></Svg></WindowButton>
      </TitleBar>

      <MenuBar><MenuList items={MENUS} /></MenuBar>

      <StatusLine>
        <Grip $h={20} />
        <SelectBox $w={97} $h={21}>
          <select aria-label="菜单集" defaultValue="建模"><option>建模</option></select>
          <DownArrow />
        </SelectBox>
        <IconStrip items={FILE_ICONS} set={STATUS} size={20} cell={23} height={22} sep={22} active={['selObj']} />
        <OutlineInput aria-label="激活曲面" defaultValue="无激活曲面" $w={100} />
        <IconStrip items={RENDER_ICONS} set={STATUS} size={20} cell={23} height={22} sep={22} />
        <Spacer />
        <IconStrip items={['modeling', 'attr', 'toolSet', 'layers']} set={STATUS} size={20} cell={23} height={22} sep={22} active={['layers']} />
      </StatusLine>

      <ShelfArea>
        <Grip $h={66} />
        <ShelfHandle>
          <Svg width="11" height="6"><path d="M0 1h11M0 4h11" stroke="#9a9a9a" strokeWidth="2" /></Svg>
          <Svg width="12" height="12">
            <circle cx="6" cy="6" r="4" fill="none" stroke={GREY} strokeWidth="3" strokeDasharray="2 1.140" />
            <circle cx="6" cy="6" r="3" fill="#323232" stroke={GREY} strokeWidth="1.500" />
          </Svg>
        </ShelfHandle>
        <ShelfMain>
          <TabRow>
            {SHELF_TABS.map((t) => (
              <Tab key={t.name} type="button" $active={t.name === shelf} $marked={t.marked} onClick={() => setShelf(t.name)}>
                {t.name}
              </Tab>
            ))}
          </TabRow>
          <ShelfBody>
            <IconStrip items={SHELF_ICONS} set={SHELF} size={28} cell={35} height={34} sep={12} />
            <Spacer />
            <ShelfScroll>
              <Svg width="11" height="34">
                <path d="M1 9l4.500-5L10 9zM1 25l4.500 5 4.500-5z" fill={GREY} />
                <circle cx="5.500" cy="17" r="5" fill="#5d5d5d" />
              </Svg>
            </ShelfScroll>
          </ShelfBody>
        </ShelfMain>
      </ShelfArea>

      <Workspace>
        <Toolbox>
          <WideGrip />
          {TOOLS.map((t) => (
            <ToolButton key={t} type="button" aria-label={t} $active={t === tool} onClick={() => setTool(t)}>
              <Icon set={TOOLBOX} name={t} size={28} />
            </ToolButton>
          ))}
          <ToolRule />
          {LAYOUTS.map((t) => (
            <ToolButton key={t} type="button" aria-label={t}>
              <Icon set={TOOLBOX} name={t} size={28} />
            </ToolButton>
          ))}
          <MoreButton type="button" aria-label="more">
            <Svg width="6" height="4"><path d="M0 0h6L3 4z" fill={GREY} /></Svg>
          </MoreButton>
          <Spacer />
          <Icon set={TOOLBOX} name="logo" size={30} box={28} />
        </Toolbox>

        <ViewPanel>
          <PanelMenu><MenuList items={PANEL_MENUS} /></PanelMenu>
          <PanelBar>
            <IconStrip items={PANEL_ICONS} set={PANEL} size={16} cell={20} height={19} sep={11} active={['grid', 'shaded']} pressed={['gateMask', 'dof']} />
            <IconStrip items={['[aperture]']} set={PANEL} size={16} cell={20} height={19} />
            <SmallInput aria-label="曝光" defaultValue="0.00" />
            <IconStrip items={['[contrast]']} set={PANEL} size={16} cell={20} height={19} />
            <SmallInput aria-label="伽玛" defaultValue="1.00" />
            <IconStrip items={['on']} set={PANEL} size={16} cell={20} height={19} active={['on']} />
            <SelectBox $w={150} $h={17} $inset>
              <select aria-label="视图变换" defaultValue="sRGB gamma"><option>sRGB gamma</option></select>
              <DownArrow />
            </SelectBox>
          </PanelBar>
          <Viewport>
            <GroundGrid />
            <AxisMark>
              <Svg width="30" height="30">
                <path d="M14.500 8v14" stroke="#19d428" />
                <path d="M14.500 22l-8 3" stroke="#1414c8" />
                <path d="M14.500 22l8 3" stroke="#d81e1e" />
                <text x="12" y="7" fontSize="9" fontWeight="700" fill="#19d428">y</text>
                <text x="1" y="26" fontSize="9" fontWeight="700" fill="#1414c8">z</text>
                <text x="22" y="26" fontSize="9" fontWeight="700" fill="#d81e1e">x</text>
              </Svg>
            </AxisMark>
            <CameraName>persp</CameraName>
          </Viewport>
        </ViewPanel>

        <SidePanel>
          <DockTitle>
            <Dots />
            通道盒/层编辑器
            <Dots />
            <DockButton type="button" aria-label="float"><Svg width="9" height="9"><path d="M3.500 1h5v4h-5zM.5 4h5v4h-5z" fill="#333" stroke="#ddd" /></Svg></DockButton>
            <DockButton type="button" aria-label="close"><Svg width="9" height="9"><path d="M1 1l7 7M8 1L1 8" stroke="#ddd" strokeWidth="2" /></Svg></DockButton>
          </DockTitle>
          <ManipRow>
            <Svg width="16" height="16">
              <path d="M8 10V4M8 10H3M8 10l4 3" stroke="#888" />
              <path d="M5.500 6L8 1l2.500 5z" fill="#33b24a" />
              <path d="M0 9.500l4-2v4z" fill="#2222cc" />
              <path d="M10 10l5 5-5-1z" fill="#e03434" />
            </Svg>
            <Svg width="16" height="16"><circle cx="8" cy="8" r="6.500" fill="#3d4640" stroke="#34503a" /><path d="M8 2a6 6 0 0 0 0 12z" fill="#2f5236" /></Svg>
            <Svg width="16" height="16"><path d="M2 14L14 2" stroke="#6b3434" strokeWidth="1.500" /></Svg>
          </ManipRow>
          <ChannelMenu><MenuList items={CHANNEL_MENUS} /></ChannelMenu>
          <ChannelBox />
          <SideRule />
          <TabRow>
            {['显示', '渲染', '动画'].map((t, i) => (
              <Tab key={t} type="button" $active={i === 0}>{t}</Tab>
            ))}
          </TabRow>
          <LayerPanel>
            <LayerMenu><MenuList items={LAYER_MENUS} /></LayerMenu>
            <LayerBar>
              <IconStrip items={LAYER_ICONS} set={PANEL} size={16} cell={24} height={18} />
            </LayerBar>
            <LayerList>
              <HScroll>
                <Svg width="7" height="9"><path d="M6 0v9L1 4.500z" fill={GREY} /></Svg>
                <ScrollTrack><ScrollThumb /></ScrollTrack>
                <Svg width="7" height="9"><path d="M1 0v9l5-4.500z" fill={GREY} /></Svg>
              </HScroll>
            </LayerList>
          </LayerPanel>
        </SidePanel>
      </Workspace>

      <TimeRow>
        <Grip $h={28} />
        <TimeTrack>
          <CurrentFrame>1</CurrentFrame>
          <Lead />
          {FRAMES.map((f) => (
            <FrameCell key={f} $last={f === 120}>{f}</FrameCell>
          ))}
        </TimeTrack>
        <FrameInput aria-label="当前帧" defaultValue="1" />
        <PlayBar>
          <IconStrip items={PLAY_ICONS} set={PLAY} size={20} cell={23} height={22} />
        </PlayBar>
      </TimeRow>

      <RangeRow>
        <Grip $h={24} />
        <NumberInput aria-label="动画开始" defaultValue="1" />
        <NumberInput aria-label="播放开始" defaultValue="1" />
        <RangeTrack>
          <RangeBar>
            <Knob type="range" aria-label="范围开始" />
            <span>1</span>
            <Spacer />
            <span>120</span>
            <Knob type="range" aria-label="范围结束" />
          </RangeBar>
        </RangeTrack>
        <NumberInput aria-label="播放结束" defaultValue="120" />
        <NumberInput aria-label="动画结束" defaultValue="200" />
        <LayerPick>
          <HollowArrow />
          <OutlineInput aria-label="动画层" defaultValue="无动画层" $w={102} />
        </LayerPick>
        <LayerPick>
          <HollowArrow />
          <OutlineInput aria-label="角色集" defaultValue="无角色集" $w={102} />
        </LayerPick>
        <RangeIcons>
          <IconStrip items={['loop', 'runner']} set={STATUS} size={20} cell={30} height={22} />
        </RangeIcons>
      </RangeRow>

      <CommandRow>
        <Grip $h={24} />
        <CommandLabel type="button">MEL</CommandLabel>
        <CommandInput aria-label="命令行" />
        <CommandOutput aria-label="结果" readOnly />
        <IconStrip items={['script']} set={STATUS} size={20} cell={30} height={22} />
      </CommandRow>
    </Window>
  );
};

// Styled components
const GlobalStyle = createGlobalStyle`
  * {
    box-sizing: border-box;
  }

  body {
    margin: 0;
    background: #444;
    overflow: hidden;
  }

  button, input, select {
    font: inherit;
    color: inherit;
    margin: 0;
    padding: 0;
    border: none;
    border-radius: 0;
    background: none;
    outline: none;
    min-width: 0;
  }
`;

const bracketSide = css`
  content: '';
  position: absolute;
  top: 0;
  bottom: 0;
  width: 5px;
  border: 2px solid #2bea20;
  outline: 1px solid #182a16;
`;

const brackets = css`
  position: relative;

  &::before {
    ${bracketSide}
    left: 1px;
    border-right: none;
    clip-path: inset(-1px 0 -1px -1px);
  }

  &::after {
    ${bracketSide}
    right: 1px;
    border-left: none;
    clip-path: inset(-1px -1px -1px 0);
  }
`;

const Svg = styled.svg`
  display: block;
  flex: none;
  overflow: visible;
`;

const Spacer = styled.div`
  flex: 1;
`;

const Window = styled.div`
  height: 100vh;
  display: flex;
  flex-direction: column;
  overflow: hidden;
  background: #444;
  color: #c8c8c8;
  border-top: 1px solid #2b262c;
  border-left: 1px solid #2b2b36;
  font: 12px/16px 'Noto Sans', 'Noto Sans CJK SC', sans-serif;
`;

const TitleBar = styled.header`
  flex: none;
  height: 37px;
  display: flex;
  align-items: center;
  padding: 0 2px 2px 0;
  background: #fff;
  color: #000;
`;

const AppIcon = styled.div`
  width: 20px;
  height: 20px;
  margin: 0 6px 0 8px;
  display: grid;
  place-items: center;
  background: #b9e6e6;
`;

const Title = styled.h1`
  flex: 1;
  margin: 0;
  font-size: 15px;
  line-height: 20px;
  font-weight: 400;
`;

const WindowButton = styled.button`
  width: 58px;
  height: 34px;
  display: grid;
  place-items: center;
`;

const MenuItem = styled.button`
  line-height: 16px;
  white-space: nowrap;
`;

const MenuBar = styled.nav`
  flex: none;
  height: 23px;
  display: flex;
  align-items: center;
  gap: 15px;
  padding-left: 9px;
`;

const StatusLine = styled.div`
  flex: none;
  height: 28px;
  display: flex;
  align-items: center;
  padding: 0 4px 3px 0;
`;

const Grip = styled.div`
  flex: none;
  width: 6px;
  height: ${(props) => props.$h}px;
  margin: 0 5px 0 7px;
  background-image: radial-gradient(#777 1px, transparent 1px);
  background-size: 3px 3px;
`;

const SelectBox = styled.label`
  flex: none;
  width: ${(props) => props.$w}px;
  height: ${(props) => props.$h}px;
  margin-left: ${(props) => (props.$inset ? 3 : 1)}px;
  display: flex;
  align-items: stretch;
  background: #5d5d5d;
  border-radius: 2px;
  color: #e4e4e4;

  select {
    flex: 1;
    appearance: none;
    padding-left: 3px;
  }
`;

const DownArrow = styled.span`
  width: 19px;
  display: grid;
  place-items: center;
  border-left: 1px solid #4b4b4b;

  &::before {
    content: '';
    border: 5px solid transparent;
    border-top-color: #c3c3c3;
    border-bottom: none;
  }
`;

const Separator = styled.span`
  flex: none;
  width: ${(props) => props.$w}px;
  height: ${(props) => (props.$plain ? 34 : 17)}px;
  background: ${(props) =>
    props.$plain
      ? 'linear-gradient(#999, #999) center / 2px 100% no-repeat'
      : 'linear-gradient(#8e8e8e, #8e8e8e) center / 3px 10px no-repeat, linear-gradient(#777, #777) center / 1px 100% no-repeat'};
`;

const Collapse = styled.span`
  flex: none;
  width: ${(props) => props.$w}px;
  height: 18px;
  display: flex;
  align-items: center;
  padding-left: 9px;

  &::before {
    content: '';
    width: 1px;
    height: 18px;
    background: #888;
  }

  &::after {
    content: '';
    border: 5px solid transparent;
    border-left: 3px solid #999;
    border-right: none;
  }
`;

const IconButton = styled.button`
  flex: none;
  width: ${(props) => props.$w}px;
  height: ${(props) => props.$h}px;
  display: grid;
  place-items: center;
  border-radius: 2px;
  ${(props) => props.$active && 'background: #5285a6;'}
  ${(props) => props.$pressed && 'background: #3f3f3f; border: 1px solid #2b2b2b;'}
  ${(props) => props.$marked && brackets}
`;

const OutlineInput = styled.input`
  flex: none;
  width: ${(props) => props.$w}px;
  height: 22px;
  margin: 0 1px;
  padding-left: 5px;
  border: 1px solid #505050;
  border-radius: 2px;
`;

const ShelfArea = styled.section`
  flex: none;
  height: 74px;
  display: flex;
  align-items: flex-start;
  padding: 3px 4px 0 0;
  border-bottom: 2px solid #2e2e2e;
`;

const ShelfHandle = styled.div`
  width: 21px;
  height: 69px;
  display: flex;
  flex-direction: column;
  align-items: center;
  justify-content: space-between;
  padding: 12px 0 11px;
  background: #333;
`;

const ShelfMain = styled.div`
  flex: 1;
  min-width: 0;
  margin-left: 3px;
`;

const TabRow = styled.div`
  display: flex;
  height: 25px;
`;

const Tab = styled.button`
  flex: none;
  height: 25px;
  padding: 0 14px;
  border-left: 1px solid #444;
  border-right: 1px solid #303030;
  background: ${(props) => (props.$active ? '#6d6d6d' : '#383838')};
  color: ${(props) => (props.$active ? '#f2f2f2' : '#a2a2a2')};
  ${(props) => props.$marked && brackets}
`;

const ShelfBody = styled.div`
  height: 44px;
  display: flex;
  align-items: center;
  padding: 0 5px 0 2px;
  border: 1px solid #2b2b2b;
`;

const ShelfScroll = styled.div`
  width: 12px;
  background: #383838;
`;

const Workspace = styled.main`
  flex: 1;
  min-height: 0;
  display: flex;
`;

const Toolbox = styled.aside`
  flex: none;
  width: 44px;
  display: flex;
  flex-direction: column;
  align-items: center;
  padding: 9px 0 4px;
  border-right: 1px solid #2f2f2f;
`;

const WideGrip = styled.div`
  flex: none;
  width: 34px;
  height: 6px;
  margin-bottom: 2px;
  background-image: radial-gradient(#777 1px, transparent 1px);
  background-size: 3px 3px;
`;

const ToolButton = styled.button`
  flex: none;
  width: 36px;
  height: 36px;
  margin-bottom: 1px;
  display: grid;
  place-items: center;
  border-radius: 2px;
  ${(props) => props.$active && 'background: #5285a6;'}
`;

const ToolRule = styled.div`
  flex: none;
  width: 36px;
  height: 2px;
  margin: 41px 0 5px;
  background: #919191;
`;

const MoreButton = styled.button`
  width: 30px;
  height: 30px;
  margin-top: 1px;
  display: grid;
  place-items: center;
  border: 1px solid #2b2b2b;
`;

const ViewPanel = styled.section`
  flex: 1;
  min-width: 0;
  display: flex;
  flex-direction: column;
  margin: 2px 0 1px 1px;
  border: 1px solid #7f837f;
`;

const PanelMenu = styled.nav`
  height: 21px;
  display: flex;
  align-items: center;
  gap: 15px;
  padding-left: 8px;
`;

const PanelBar = styled.div`
  height: 22px;
  display: flex;
  align-items: center;
`;

const SmallInput = styled.input`
  width: 36px;
  height: 15px;
  margin: 0 3px;
  background: #2f2f2f;
  text-align: center;
  line-height: 15px;
`;

const Viewport = styled.div`
  flex: 1;
  min-height: 0;
  position: relative;
  background: #5c5c5c;
`;

const Scene = styled.svg`
  display: block;
  width: 100%;
  height: 100%;
`;

const AxisMark = styled.div`
  position: absolute;
  left: 11px;
  bottom: 17px;
`;

const CameraName = styled.div`
  position: absolute;
  left: 0;
  right: 14px;
  bottom: 6px;
  text-align: center;
  font: 700 10px/16px 'Noto Sans', sans-serif;
  color: #fff;
`;

const SidePanel = styled.aside`
  flex: none;
  width: 237px;
  display: flex;
  flex-direction: column;
  padding: 4px 3px 0 7px;
  margin-left: 1px;
  border-left: 1px solid #2f2f2f;
`;

const DockTitle = styled.div`
  flex: none;
  height: 16px;
  display: flex;
  align-items: center;
  gap: 2px;
  font-size: 10px;
  line-height: 16px;
  white-space: nowrap;
`;

const Dots = styled.span`
  flex: 1;
  height: 6px;
  margin: 0 6px 0 0;
  background-image: radial-gradient(#777 1px, transparent 1px);
  background-size: 3px 3px;

  &:not(:first-child) {
    margin: 0 0 0 8px;
  }
`;

const DockButton = styled.button`
  width: 14px;
  height: 14px;
  display: grid;
  place-items: center;
  border: 1px solid #7d868c;
  border-radius: 2px;
  background: #333;
`;

const ManipRow = styled.div`
  flex: none;
  height: 23px;
  display: flex;
  align-items: center;
  justify-content: flex-end;
  gap: 5px;
`;

const ChannelMenu = styled.nav`
  flex: none;
  height: 26px;
  display: flex;
  align-items: center;
  gap: 15px;
  padding-left: 8px;
`;

const ChannelBox = styled.div`
  flex: 1;
  background: #2b2b2b;
`;

const SideRule = styled.hr`
  flex: none;
  width: 100%;
  height: 1px;
  margin: 1px 0 10px;
  border: none;
  background: #2b2b2b;
`;

const LayerPanel = styled.section`
  flex: none;
  height: 185px;
  display: flex;
  flex-direction: column;
  margin-bottom: 1px;
  padding: 0 4px 4px 3px;
  border: 1px solid #2b2b2b;
`;

const LayerMenu = styled.nav`
  height: 26px;
  display: flex;
  align-items: center;
  gap: 15px;
  padding-left: 7px;
`;

const LayerBar = styled.div`
  height: 25px;
  display: flex;
  justify-content: flex-end;
  align-items: flex-start;
`;

const LayerList = styled.div`
  flex: 1;
  display: flex;
  flex-direction: column;
  justify-content: flex-end;
  background: #2b2b2b;
`;

const HScroll = styled.div`
  height: 13px;
  display: flex;
  align-items: center;
  gap: 4px;
  padding: 0 3px 0 2px;
  background: #333;
`;

const ScrollTrack = styled.div`
  flex: 1;
`;

const ScrollThumb = styled.div`
  width: 61%;
  height: 10px;
  border-radius: 3px;
  background: #5d5d5d;
`;

const TimeRow = styled.section`
  flex: none;
  height: 36px;
  display: flex;
  align-items: center;
  padding-bottom: 2px;
  border-top: 2px solid #2f2f2f;
`;

const TimeTrack = styled.div`
  flex: 1;
  min-width: 0;
  height: 28px;
  display: flex;
  position: relative;
  overflow-x: clip;
  margin: 0 7px 0 -2px;
  background: #2b2b2b;
  color: #808080;
`;

const CurrentFrame = styled.div`
  position: absolute;
  left: 7px;
  top: 0;
  width: 7px;
  height: 28px;
  padding-top: 9px;
  background: #505050;
  color: #e8e8e8;
`;

const Lead = styled.div`
  flex: 39 1 0;
`;

const FrameCell = styled.div`
  flex: ${(props) => (props.$last ? 12 : 41)} 1 0;
  min-width: 0;
  line-height: 14px;
  background: linear-gradient(#8c8c8c, #8c8c8c) left bottom / 2px 11px no-repeat;
  padding-left: 2px;
`;

const NumberInput = styled.input`
  flex: none;
  width: 68px;
  height: 23px;
  padding-left: 6px;
  border-radius: 2px;
  background: #2b2b2b;
`;

const FrameInput = styled(NumberInput)`
  height: 21px;
  margin-top: 4px;
`;

const PlayBar = styled.div`
  display: flex;
  margin: 0 10px 0 7px;
`;

const RangeRow = styled.section`
  flex: none;
  height: 33px;
  display: flex;
  align-items: center;
  padding-right: 6px;
  gap: 8px;

  > :first-child {
    margin-right: -3px;
  }
`;

const RangeTrack = styled.div`
  flex: 1;
  height: 23px;
  padding: 2px 4px;
  background: #383838;
`;

const RangeBar = styled.div`
  width: 62%;
  height: 19px;
  display: flex;
  align-items: center;
  gap: 4px;
  padding: 0 4px;
  border-radius: 2px;
  background: #5d5d5d;
`;

const Knob = styled.input`
  flex: none;
  width: 12px;
  height: 13px;
  appearance: none;

  &::-webkit-slider-thumb {
    appearance: none;
    width: 12px;
    height: 13px;
    border-radius: 2px;
    background: #939393;
  }
`;

const LayerPick = styled.label`
  flex: none;
  display: flex;
  align-items: center;
  gap: 5px;

  & + & {
    margin-left: 4px;
  }
`;

const RangeIcons = styled.div`
  display: flex;
  margin-left: -6px;
`;

const CommandRow = styled.section`
  flex: none;
  height: 28px;
  display: flex;
  align-items: stretch;
  padding: 5px 4px 0 0;
`;

const CommandLabel = styled.button`
  width: 45px;
  padding-right: 4px;
`;

const CommandInput = styled.input`
  width: 294px;
  padding-left: 6px;
  background: #2b2b2b;
`;

const CommandOutput = styled.input`
  flex: 1;
  margin-left: 6px;
  padding-left: 6px;
  background: #2b2b2b;
`;

export default App;
